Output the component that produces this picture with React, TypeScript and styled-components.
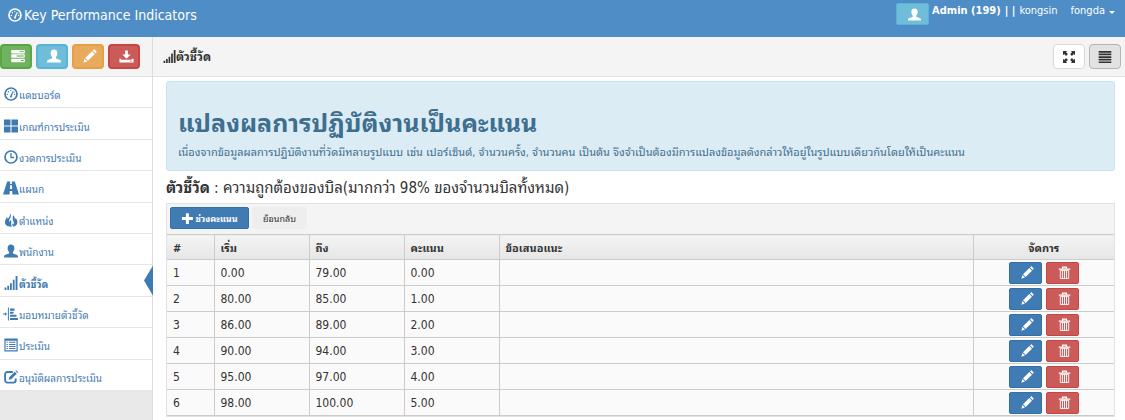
import React from "react";
import styled, { createGlobalStyle } from "styled-components";

const GlobalStyle = createGlobalStyle`
  *, *::before, *::after { box-sizing: border-box; }
  body {
    margin: 0;
    background: #fff;
    color: #333;
    font-family: Tahoma, "DejaVu Sans Condensed", "Noto Sans Thai Looped", Loma, Waree, Garuda, "Noto Sans Thai", sans-serif;
    font-size: 12px;
    line-height: 16px;
  }
  button { font-family: inherit; cursor: pointer; }
  h1, h2, p, ul { margin: 0; padding: 0; }
`;

type IconName =
  | "dashboard" | "grid" | "time" | "road" | "fire" | "user" | "signal" | "indent" | "list"
  | "edit" | "tasks" | "pencil" | "save" | "fullscreen" | "justify" | "plus" | "trash";

const glyphs: Record<IconName, React.ReactNode> = {
  dashboard: (
    <>
      <circle cx="7" cy="7" r="6" fill="none" stroke="currentColor" strokeWidth="1.7" />
      <path d="M6.2 9.2 8.8 4l.6.3-1.6 5.4a.9.9 0 1 1-1.6-.5Z" />
      <circle cx="3.4" cy="7.4" r=".7" /><circle cx="4.4" cy="4.8" r=".7" />
      <circle cx="6.8" cy="3.6" r=".7" /><circle cx="10.6" cy="7.4" r=".7" /><circle cx="10" cy="5.2" r=".6" />
    </>
  ),
  grid: <path d="M0 .5h6.500v6H0zM7.500.500H14v6H7.500zM0 7.500h6.500v6H0zM7.500 7.500H14v6H7.500z" />,
  time: (
    <g fill="none" stroke="currentColor">
      <circle cx="7" cy="7" r="6" strokeWidth="1.7" />
      <path d="M7 3v4.5h3.2" strokeWidth="1.3" />
    </g>
  ),
  road: <path fillRule="evenodd" d="M3.2.5h3L6.1 3h1.8L7.8.5h3L15 13.5H8.4L8.2 10H5.8l-.2 3.5H-1L3.2.5ZM6 4.2 5.9 8h2.2L8 4.2H6Z" />,
  fire: (
    <path d="M6.200.2c.9 1.900.900 3.400.1 4.900-.9 1.600-1.600 2.700-.8 4.100.3-1 .8-1.600 1.400-2.100.9 2 .2 3 .3 4.300.1.900.4 1.500.8 2.200C3.900 14 .9 12.200.9 9.200c0-2.200 1.400-3.100 1.800-5.200.8.6 1 1.200 1 2C5.200 4.400 6.300 2.800 6.200.2Zm2.900 2c1.700 1.200 2 2.800 1.500 4.300.6-.3.9-.8 1-1.600 1.300 1.400 1.900 2.800 1.800 4.500-.1 2.300-1.700 3.700-4.200 4.200-.9-1.200-1.200-2.200-1-3.300.5.300.9.900 1 1.500 1-1.200.9-2.300.2-3.500-.9-1.500-.9-3.700-.3-6.100Z" />
  ),
  user: <path d="M7 .6c2.100 0 3.400 1.300 3.400 3.500 0 1.700-.6 3.100-1.500 4v1.200c.3.500 4 1.300 4.700 2.100.4.500.4 1.200.4 2H0c0-.8 0-1.500.4-2 .7-.8 4.400-1.600 4.700-2.100V8.100c-.9-.9-1.500-2.300-1.500-4C3.600 1.900 4.900.6 7 .6Z" />,
  signal: <path d="M.6 11.500h1.800V14H.6zM3.300 9.800h1.800V14H3.300zM6 7.200h1.800V14H6zM8.800 3.800h1.800V14H8.800zM11.600 0h1.900v14h-1.900z" />,
  indent: <path d="M3.900.4h1v13.200h-1zM-1 6.500h2V5.300L3.200 7 1 8.700V7.500h-2zM6 1.500h4.500v2.200H6zM6 4.800h3.500v1.900H6zM6 7.800h6.500v1.900H6zM6 11h8v2H6z" />,
  list: (
    <>
      <path fillRule="evenodd" d="M.4.500h13.300v13H.4zM1.600 2.700v9.600h10.900V2.700z" />
      <path d="M2.600 3.800h1.300v1H2.600zM5 3.800h6.500v1H5zM2.600 5.900h1.300v1H2.600zM5 5.900h6.500v1H5zM2.600 8h1.300v1H2.600zM5 8h6.500v1H5zM2.600 10.100h1.300v1H2.600zM5 10.100h6.500v1H5z" />
    </>
  ),
  edit: (
    <>
      <path d="M8.800 2H3.400A2.300 2.300 0 0 0 1.100 4.300v6a2.300 2.300 0 0 0 2.300 2.300h6a2.300 2.300 0 0 0 2.300-2.300V8.600" fill="none" stroke="currentColor" strokeWidth="1.900" />
      <path d="m4.700 9.800.5-2.500L10.700 1.800l2 2-5.500 5.500zM11.400 1.100l.8-.8 2 2-.8.8z" />
    </>
  ),
  tasks: (
    <>
      <rect x=".2" y=".9" width="13.600" height="3.500" rx=".7" />
      <rect x=".2" y="5.300" width="13.600" height="3.500" rx=".7" />
      <rect x=".2" y="9.700" width="13.600" height="3.500" rx=".7" />
      <path d="M8.500 2.200h4.200v.9H8.500zM5.500 6.600h7.200v.9H5.500zM10 11h2.700v.9H10z" fill="#5aa548" />
    </>
  ),
  pencil: <path d="M.4 13.600 1.500 9.700l2.800 2.800-3.900 1.100ZM2.200 9 9 2.200 11.800 5 5 11.800 2.200 9ZM9.700 1.500l.8-.8c.4-.4.9-.4 1.300 0l1.500 1.500c.4.400.4.900 0 1.300l-.8.8-2.800-2.800Z" />,
  save: <path fillRule="evenodd" d="M5.500.5h3v4.300h3L7 9.400 2.500 4.800h3V.5ZM-.6 9.300h1.900v1.300h11.400V9.300h1.900v4.200H-.6V9.300Zm11.400 2.300v.9h1.900v-.9h-1.900Z" />,
  fullscreen: <path d="M1 1h4.200L4 2.200l1.900 1.900-1.800 1.800L2.200 4 1 5.200zM13 1v4.200L11.800 4 9.900 5.900 8.100 4.100 10 2.200 8.800 1zM1 13V8.800L2.200 10l1.900-1.900 1.800 1.800L4 11.800 5.200 13zM13 13H8.800l1.200-1.200-1.900-1.900 1.800-1.800 1.900 1.900L13 8.800z" />,
  justify: <path d="M.7 1h12.600v1.700H.7zM.7 3.600h12.600v1.700H.7zM.7 6.200h12.600v1.700H.7zM.7 8.800h12.600v1.700H.7zM.7 11.400h12.600v1.700H.7z" />,
  plus: <path d="M5.300 1.300h3.200v4h4.300v3.200H8.500v4.300H5.300V8.500H1V5.300h4.300z" />,
  trash: (
    <g fill="none" stroke="currentColor">
      <path d="M.8 3.300h12.400M4.900 3V1.100h4.200V3" strokeWidth="1.300" />
      <path d="M2.500 4.700h9v8.700h-9zM4.800 5v8M7 5v8M9.200 5v8" strokeWidth="1" />
    </g>
  ),
};

const Svg = styled.svg`
  flex: none;
  overflow: visible;
`;

function Icon({ name, size = 14 }: { name: IconName; size?: number }) {
  return (
    <Svg width={size} height={size} viewBox="0 0 14 14" fill="currentColor" aria-hidden="true">
      {glyphs[name]}
    </Svg>
  );
}

const Page = styled.div`
  display: flex;
  flex-direction: column;
  min-height: 100vh;
`;

const Header = styled.header`
  display: flex;
  justify-content: space-between;
  height: 37px;
  padding: 0 10px 0 8px;
  background: #4f8dc6;
  color: #fff;
`;

const Brand = styled.a`
  display: flex;
  align-items: center;
  gap: 2px;
  height: 30px;
  color: inherit;
  font-size: 14px;
  text-decoration: none;
`;

const Account = styled.div`
  display: flex;
  align-items: flex-start;
  gap: 3px;
  padding-top: 3px;
`;

const AccountMenu = styled.button`
  display: flex;
  align-items: center;
  gap: 4px;
  padding: 0;
  border: 0;
  background: none;
  color: inherit;
  font-size: 11px;
  line-height: 16px;
`;

const Surname = styled.span`
  margin-left: 9px;
`;

const Caret = styled.span`
  margin-top: 3px;
  border: 3px solid transparent;
  border-top-color: #fff;
  border-bottom: 0;
`;

const tones = {
  green: ["#6fb25f", "#5aa548"],
  cyan: ["#70bdd9", "#56b4d6"],
  orange: ["#e8ab5e", "#e69f45"],
  red: ["#cb5b58", "#c74643"],
  blue: ["#407cb3", "#336fa8"],
  white: ["#fff", "#d8d8d8"],
  grey: ["#e2e2e2", "#b4b4b4"],
};

const IconButton = styled.button<{ $tone: keyof typeof tones; $tall?: boolean; $thick?: boolean }>`
  display: flex;
  align-items: center;
  justify-content: center;
  width: ${(p) => (p.$tall ? 32 : 33)}px;
  height: ${(p) => (p.$tall ? 25 : 22)}px;
  padding: 0 0 0 ${(p) => (p.$tone === "white" || p.$tone === "grey" ? 0 : 4)}px;
  border: ${(p) => (p.$thick ? 2 : 1)}px solid ${(p) => tones[p.$tone][1]};
  border-radius: ${(p) => (p.$tall ? 4 : 2)}px;
  background: ${(p) => tones[p.$tone][0]};
  color: ${(p) => (p.$tone === "white" || p.$tone === "grey" ? "#333" : "#fff")};
`;

const Body = styled.div`
  display: grid;
  grid-template-columns: 153px minmax(0, 1fr);
  flex: 1;
`;

const Sidebar = styled.aside`
  display: flex;
  flex-direction: column;
  background: #e9e9e9;
  border-right: 1px solid #dcdcdc;
`;

const Shortcuts = styled.div`
  display: flex;
  align-items: center;
  gap: 4px;
  height: 40px;
  padding-bottom: 1px;
  background: #f4f4f4;
  border-bottom: 1px solid #e4e4e4;
`;

const Menu = styled.ul`
  display: grid;
  grid-auto-rows: 1fr;
  height: 314px;
  list-style: none;
`;

const MenuItem = styled.li`
  position: relative;
  display: flex;
  background: #fff;
  border-bottom: 1px solid #e6e6e6;
`;

const MenuLink = styled.a<{ $active?: boolean }>`
  display: flex;
  align-items: center;
  gap: 1px;
  flex: 1;
  padding: 4px 0 0 4px;
  color: #3f7bb3;
  font-size: 10px;
  font-weight: ${(p) => (p.$active ? 700 : 400)};
  text-decoration: none;
  white-space: nowrap;
`;

const MenuLabel = styled.span`
  padding-top: 4px;
`;

const ActiveMark = styled.span`
  position: absolute;
  top: 0;
  right: -1px;
  width: 9px;
  height: 100%;
  background: #3f7bb3;
  clip-path: polygon(100% 0, 100% 100%, 0 50%);
`;

const Main = styled.main`
  min-width: 0;
`;

const TitleBar = styled.div`
  display: flex;
  align-items: center;
  justify-content: space-between;
  height: 40px;
  padding: 0 4px 0 10px;
  background: #f4f4f4;
  border-bottom: 1px solid #e4e4e4;
`;

const PageTitle = styled.h1`
  display: flex;
  align-items: center;
  font-size: 12px;
  line-height: 16px;
`;

const ButtonPair = styled.div`
  display: flex;
  justify-content: center;
  gap: 4px;
`;

const Content = styled.div`
  padding: 4px 10px 4px 13px;
`;

const Notice = styled.section`
  height: 90px;
  padding: 24px 11px 0;
  border: 1px solid #c5e6ee;
  border-radius: 3px;
  background: #dcecf5;
  color: #3f6f8f;
`;

const NoticeTitle = styled.h2`
  font-size: 25px;
  line-height: 36px;
`;

const NoticeText = styled.p`
  font-size: 11px;
  line-height: 22px;
`;

const Subject = styled.p`
  padding: 7px 0 5px;
  font-size: 15px;
  line-height: 20px;
`;

const Panel = styled.section`
  border: 1px solid #e2e2e2;
  background: #f4f4f4;
`;

const PanelTools = styled.div`
  display: flex;
  gap: 3px;
  padding: 3px 3px 5px;
`;

const TextButton = styled.button<{ $primary?: boolean }>`
  display: flex;
  align-items: center;
  justify-content: center;
  gap: 1px;
  width: ${(p) => (p.$primary ? 79 : 55)}px;
  height: 22px;
  padding: 0;
  border: 1px solid ${(p) => (p.$primary ? "#336fa8" : "#eee")};
  border-radius: 2px;
  background: ${(p) => (p.$primary ? "#407cb3" : "#eee")};
  color: ${(p) => (p.$primary ? "#fff" : "#333")};
  font-size: 9px;
  font-weight: ${(p) => (p.$primary ? 700 : 400)};
  white-space: nowrap;
`;

const Table = styled.table`
  width: 100%;
  table-layout: fixed;
  border-collapse: collapse;
  background: #fafafa;
`;

const HeadCell = styled.th<{ $center?: boolean }>`
  height: 25px;
  padding: 4px 6px 0;
  border: 1px solid #ccc;
  border-width: 1px 0 1px 1px;
  background: linear-gradient(#f4f4f4, #e6e6e6);
  font-size: 11px;
  text-align: ${(p) => (p.$center ? "center" : "left")};
  &:first-child { border-left: 0; }
`;

const Cell = styled.td`
  height: 26px;
  padding: 0 6px;
  border: 1px solid #ccc;
  border-width: 1px 0 1px 1px;
  font-size: 12px;
  &:first-child { border-left: 0; }
`;

const menu: { icon: IconName; label: string; active?: boolean }[] = [
  { icon: "dashboard", label: "แดชบอร์ด" },
  { icon: "grid", label: "เกณฑ์การประเมิน" },
  { icon: "time", label: "งวดการประเมิน" },
  { icon: "road", label: "แผนก" },
  { icon: "fire", label: "ตำแหน่ง" },
  { icon: "user", label: "พนักงาน" },
  { icon: "signal", label: "ตัวชี้วัด", active: true },
  { icon: "indent", label: "มอบหมายตัวชี้วัด" },
  { icon: "list", label: "ประเมิน" },
  { icon: "edit", label: "อนุมัติผลการประเมิน" },
];

const rows = [
  ["0.00", "79.00", "0.00"],
  ["80.00", "85.00", "1.00"],
  ["86.00", "89.00", "2.00"],
  ["90.00", "94.00", "3.00"],
  ["95.00", "97.00", "4.00"],
  ["98.00", "100.00", "5.00"],
];

export default function App() {
  return (
    <Page>
      <GlobalStyle />
      <Header>
        <Brand href="#"><Icon name="dashboard" />Key Performance Indicators</Brand>
        <Account>
          <IconButton $tone="cyan" aria-label="Profile"><Icon name="user" size={13} /></IconButton>
          <AccountMenu>
            <strong>Admin (199)</strong>
            <strong>| |</strong>
            <span>kongsin</span>
            <Surname>fongda</Surname>
            <Caret />
          </AccountMenu>
        </Account>
      </Header>
      <Body>
        <Sidebar>
          <Shortcuts>
            <IconButton $tone="green" $tall $thick aria-label="Tasks"><Icon name="tasks" /></IconButton>
            <IconButton $tone="cyan" $tall $thick aria-label="User"><Icon name="user" /></IconButton>
            <IconButton $tone="orange" $tall $thick aria-label="Edit"><Icon name="pencil" /></IconButton>
            <IconButton $tone="red" $tall $thick aria-label="Save"><Icon name="save" size={13} /></IconButton>
          </Shortcuts>
          <nav>
            <Menu>
              {menu.map((m) => (
                <MenuItem key={m.label}>
                  <MenuLink href="#" $active={m.active}>
                    <Icon name={m.icon} />
                    <MenuLabel>{m.label}</MenuLabel>
                  </MenuLink>
                  {m.active && <ActiveMark />}
                </MenuItem>
              ))}
            </Menu>
          </nav>
        </Sidebar>
        <Main>
          <TitleBar>
            <PageTitle><Icon name="signal" size={13} />ตัวชี้วัด</PageTitle>
            <ButtonPair>
              <IconButton $tone="white" $tall aria-label="Full screen"><Icon name="fullscreen" /></IconButton>
              <IconButton $tone="grey" $tall aria-label="Toggle menu"><Icon name="justify" /></IconButton>
            </ButtonPair>
          </TitleBar>
          <Content>
            <Notice>
              <NoticeTitle>แปลงผลการปฏิบัติงานเป็นคะแนน</NoticeTitle>
              <NoticeText>
                เนื่องจากข้อมูลผลการปฏิบัติงานที่วัดมีหลายรูปแบบ เช่น เปอร์เซ็นต์, จำนวนครั้ง, จำนวนคน เป็นต้น จึงจำเป็นต้องมีการแปลงข้อมูลดังกล่าวให้อยู่ในรูปแบบเดียวกันโดยให้เป็นคะแนน
              </NoticeText>
            </Notice>
            <Subject><strong>ตัวชี้วัด</strong> : ความถูกต้องของบิล(มากกว่า 98% ของจำนวนบิลทั้งหมด)</Subject>
            <Panel>
              <PanelTools>
                <TextButton $primary><Icon name="plus" size={13} />ช่วงคะแนน</TextButton>
                <TextButton>ย้อนกลับ</TextButton>
              </PanelTools>
              <Table>
                <colgroup>
                  <col width="47" /><col width="95" /><col width="95" /><col width="95" /><col /><col width="141" />
                </colgroup>
                <thead>
                  <tr>
                    <HeadCell>#</HeadCell>
                    <HeadCell>เริ่ม</HeadCell>
                    <HeadCell>ถึง</HeadCell>
                    <HeadCell>คะแนน</HeadCell>
                    <HeadCell>ข้อเสนอแนะ</HeadCell>
                    <HeadCell $center>จัดการ</HeadCell>
                  </tr>
                </thead>
                <tbody>
                  {rows.map((r, i) => (
                    <tr key={i}>
                      <Cell>{i + 1}</Cell>
                      {r.map((v, j) => <Cell key={j}>{v}</Cell>)}
                      <Cell />
                      <Cell>
                        <ButtonPair>
                          <IconButton $tone="blue" aria-label="Edit row"><Icon name="pencil" size={13} /></IconButton>
                          <IconButton $tone="red" aria-label="Delete row"><Icon name="trash" size={13} /></IconButton>
                        </ButtonPair>
                      </Cell>
                    </tr>
                  ))}
                </tbody>
              </Table>
            </Panel>
          </Content>
        </Main>
      </Body>
    </Page>
  );
}
